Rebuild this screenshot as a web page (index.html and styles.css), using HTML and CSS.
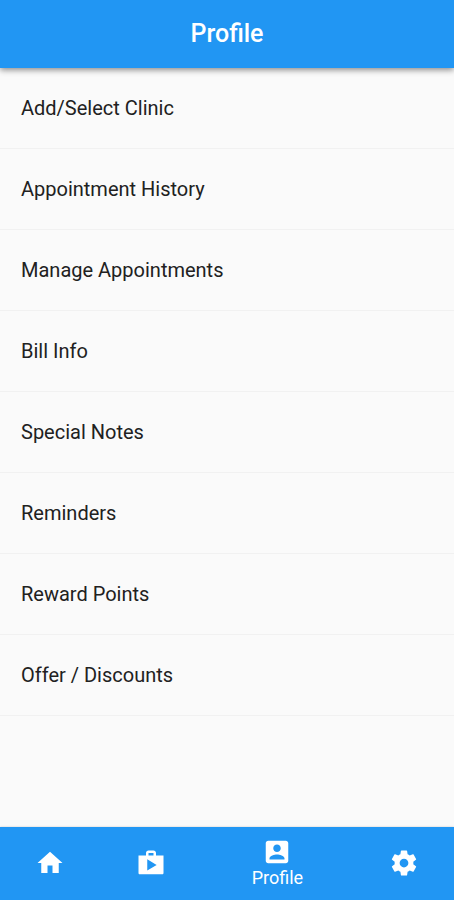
FILE: index.html
```html
<!DOCTYPE html>
<html lang="en">
<head>
    <meta charset="UTF-8">
    <meta name="viewport" content="width=device-width, initial-scale=1.0">
    <title>Profile</title>
    <link rel="stylesheet" href="styles.css">
</head>
<body>
    <header class="app-bar">
        <h1>Profile</h1>
    </header>

    <main class="content">
        <ul class="menu">
            <li><a href="#clinic">Add/Select Clinic</a></li>
            <li><a href="#history">Appointment History</a></li>
            <li><a href="#appointments">Manage Appointments</a></li>
            <li><a href="#bill">Bill Info</a></li>
            <li><a href="#notes">Special Notes</a></li>
            <li><a href="#reminders">Reminders</a></li>
            <li><a href="#rewards">Reward Points</a></li>
            <li><a href="#offers">Offer / Discounts</a></li>
        </ul>
    </main>

    <nav class="bottom-nav">
        <a href="#home" aria-label="Home">
            <svg viewBox="0 0 24 24"><path d="M10 20v-6h4v6h5v-8h3L12 3 2 12h3v8z"/></svg>
        </a>
        <a href="#shop" aria-label="Shop">
            <svg viewBox="0 0 24 24"><path d="M16 6V4c0-1.11-.89-2-2-2h-4c-1.11 0-2 .89-2 2v2H2v14c0 .6.4 1 1 1h18c.6 0 1-.4 1-1V6h-6zm-6-2h4v2h-4V4zM9 18V9l7.500 4.500L9 18z"/></svg>
        </a>
        <a href="#profile" class="active">
            <svg viewBox="0 0 24 24"><path d="M3 5v14c0 1.100.890 2 2 2h14c1.100 0 2-.9 2-2V5c0-1.100-.9-2-2-2H5c-1.110 0-2 .9-2 2zm12 4c0 1.660-1.340 3-3 3s-3-1.340-3-3 1.340-3 3-3 3 1.340 3 3zm-9 8c0-2 4-3.100 6-3.100s6 1.100 6 3.100v1H6v-1z"/></svg>
            <span>Profile</span>
        </a>
        <a href="#settings" aria-label="Settings">
            <svg viewBox="0 0 24 24"><path d="M19.430 12.980c.04-.32.07-.64.07-.98s-.03-.66-.07-.98l2.110-1.650c.19-.15.24-.42.12-.64l-2-3.460c-.12-.22-.39-.3-.61-.22l-2.490 1c-.52-.4-1.080-.73-1.690-.98l-.38-2.650C14.460 2.180 14.250 2 14 2h-4c-.25 0-.46.18-.49.42l-.38 2.650c-.61.25-1.170.59-1.690.98l-2.490-1c-.23-.09-.49 0-.61.22l-2 3.460c-.13.22-.07.49.12.64l2.110 1.650c-.04.32-.07.65-.07.98s.03.66.07.98l-2.110 1.650c-.19.15-.24.42-.12.64l2 3.460c.12.22.39.3.61.22l2.490-1c.52.4 1.080.73 1.690.98l.38 2.650c.03.24.24.42.49.42h4c.25 0 .46-.18.49-.42l.38-2.650c.61-.25 1.170-.59 1.690-.98l2.490 1c.23.09.49 0 .61-.22l2-3.460c.12-.22.07-.49-.12-.64l-2.110-1.650zM12 15.500c-1.930 0-3.500-1.570-3.500-3.500s1.570-3.500 3.500-3.500 3.500 1.570 3.500 3.500-1.570 3.500-3.500 3.500z"/></svg>
        </a>
    </nav>
</body>
</html>
```

FILE: styles.css
```css
* {
    box-sizing: border-box;
}
body {
    margin: 0;
    min-height: 100vh;
    display: flex;
    flex-direction: column;
    font-family: Roboto, Arial, sans-serif;
    background: #fafafa;
    color: #212121;
}
.app-bar {
    padding: 20px 16px;
    background: #2196f3;
    color: #fff;
    text-align: center;
    box-shadow: 0 2px 6px rgba(0, 0, 0, 0.45);
}
.app-bar h1 {
    margin: 0;
    font-size: 25px;
    line-height: 28px;
    font-weight: 500;
}
.content {
    flex: 1;
}
.menu {
    margin: 0;
    padding: 0;
    list-style: none;
}
.menu li {
    border-bottom: 1px solid #f1f1f1;
}
.menu a {
    display: block;
    padding: 28px 21px;
    color: inherit;
    font-size: 20px;
    line-height: 24px;
    text-decoration: none;
}
.bottom-nav {
    display: flex;
    background: #2196f3;
    box-shadow: 0 0 2px rgba(0, 0, 0, 0.2);
}
.bottom-nav a {
    flex: 2;
    height: 73px;
    padding-bottom: 2px;
    display: flex;
    flex-direction: column;
    align-items: center;
    justify-content: center;
    color: #fff;
    font-size: 18px;
    line-height: 22px;
    text-decoration: none;
}
.bottom-nav .active {
    flex: 3;
}
.bottom-nav svg {
    width: 30px;
    height: 30px;
    fill: currentColor;
}
```
